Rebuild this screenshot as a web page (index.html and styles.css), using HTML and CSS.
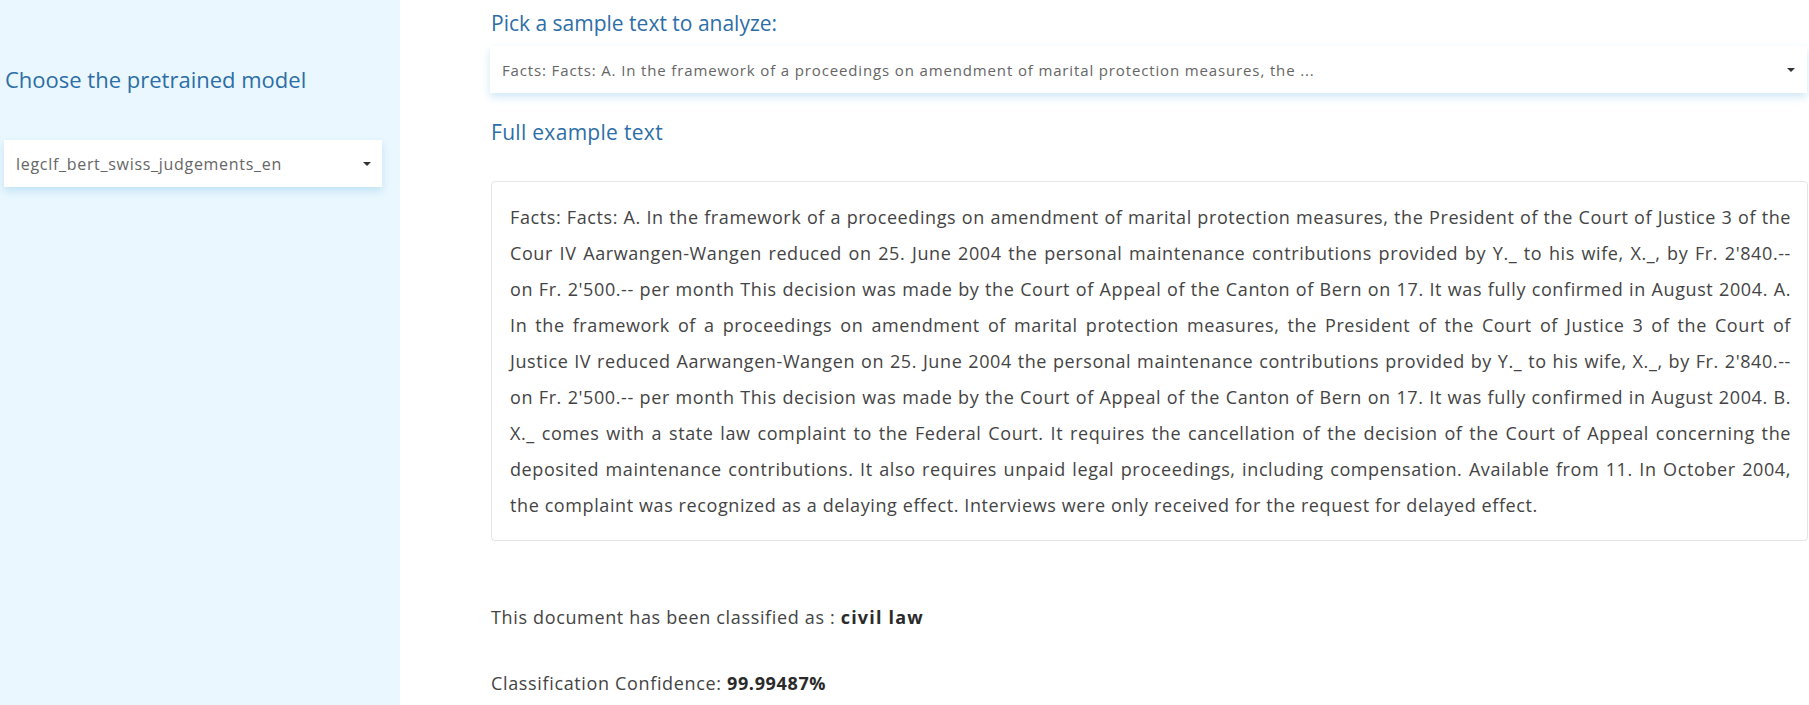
FILE: index.html
```html
<!DOCTYPE html>
<html lang="en">
<head>
<meta charset="utf-8">
<title>Legal classifier</title>
<link rel="stylesheet" href="styles.css">
</head>
<body>
<div class="app">
  <aside class="sidebar">
    <h2 class="side-title">Choose the pretrained model</h2>
    <div class="select side-select">
      <span class="select-value">legclf_bert_swiss_judgements_en</span>
      <span class="caret"></span>
    </div>
  </aside>
  <main class="main">
    <h2 class="label">Pick a sample text to analyze:</h2>
    <div class="select main-select">
      <span class="select-value">Facts: Facts: A. In the framework of a proceedings on amendment of marital protection measures, the ...</span>
      <span class="caret"></span>
    </div>
    <h2 class="label full-label">Full example text</h2>
    <div class="text-box">
      <p class="doc">
        <span class="ln">Facts: Facts: A. In the framework of a proceedings on amendment of marital protection measures, the President of the Court of Justice 3 of the</span>
        <span class="ln">Cour IV Aarwangen-Wangen reduced on 25. June 2004 the personal maintenance contributions provided by Y._ to his wife, X._, by Fr. 2'840.--</span>
        <span class="ln">on Fr. 2'500.-- per month This decision was made by the Court of Appeal of the Canton of Bern on 17. It was fully confirmed in August 2004. A.</span>
        <span class="ln">In the framework of a proceedings on amendment of marital protection measures, the President of the Court of Justice 3 of the Court of</span>
        <span class="ln">Justice IV reduced Aarwangen-Wangen on 25. June 2004 the personal maintenance contributions provided by Y._ to his wife, X._, by Fr. 2'840.--</span>
        <span class="ln">on Fr. 2'500.-- per month This decision was made by the Court of Appeal of the Canton of Bern on 17. It was fully confirmed in August 2004. B.</span>
        <span class="ln">X._ comes with a state law complaint to the Federal Court. It requires the cancellation of the decision of the Court of Appeal concerning the</span>
        <span class="ln">deposited maintenance contributions. It also requires unpaid legal proceedings, including compensation. Available from 11. In October 2004,</span>
        <span class="ln last">the complaint was recognized as a delaying effect. Interviews were only received for the request for delayed effect.</span>
      </p>
    </div>
    <p class="result">This document has been classified as : <strong class="wide">civil law</strong></p>
    <p class="result conf">Classification Confidence: <strong>99.99487%</strong></p>
  </main>
</div>
</body>
</html>
```

FILE: styles.css
```css
* { box-sizing: border-box; }

html, body {
  margin: 0;
  padding: 0;
  height: 100%;
  overflow: hidden;
  background: #ffffff;
  font-family: "Open Sans", "Liberation Sans", sans-serif;
}

.app {
  display: flex;
  height: 705px;
}

.sidebar {
  width: 400px;
  flex: none;
  background: #eaf7fe;
  padding: 62px 18px 0 4px;
}

.side-title {
  margin: 0 0 0 1px;
  font-size: 22px;
  line-height: 34px;
  font-weight: 400;
  color: #2d6ea6;
}

.select {
  display: flex;
  align-items: center;
  justify-content: space-between;
  height: 47px;
  background: #ffffff;
  box-shadow: 0 4px 8px rgba(120, 190, 230, 0.35);
  color: #666666;
}

.side-select {
  margin-top: 44px;
  padding: 0 11px 0 12px;
  font-size: 16px;
  letter-spacing: 0.7px;
}

.caret {
  width: 0;
  height: 0;
  border-left: 4px solid transparent;
  border-right: 4px solid transparent;
  border-top: 4px solid #333333;
  flex: none;
}

.main {
  flex: 1;
  padding: 8px 0 0 90px;
  min-width: 0;
}

.label {
  margin: 0 0 0 1px;
  font-size: 21px;
  line-height: 30px;
  font-weight: 400;
  color: #2d6ea6;
}

.main-select {
  margin-top: 8px;
  margin-right: 2px;
  padding: 0 12px 0 12px;
  font-size: 15px;
  letter-spacing: 0.86px;
}

.full-label {
  margin-top: 24px;
  letter-spacing: 0.3px;
}

.text-box {
  margin-top: 34px;
  margin-left: 1px;
  margin-right: 1px;
  border: 1px solid #e4e4e4;
  border-radius: 4px;
  padding: 17px 16px 17px 18px;
}

.doc {
  margin: 0;
  font-size: 18px;
  line-height: 36px;
  color: #444444;
  letter-spacing: 0.6px;
}

.ln {
  display: block;
  text-align: justify;
  text-align-last: justify;
  white-space: nowrap;
}

.ln.last {
  text-align-last: left;
}

.result {
  margin: 0 0 0 1px;
  font-size: 18px;
  line-height: 24px;
  color: #444444;
  letter-spacing: 0.65px;
}

.result strong {
  color: #2a2a2a;
  font-weight: 700;
}

.result strong.wide {
  letter-spacing: 1.2px;
}

.result:first-of-type { margin-top: 64px; }

.conf { margin-top: 42px; }
```
